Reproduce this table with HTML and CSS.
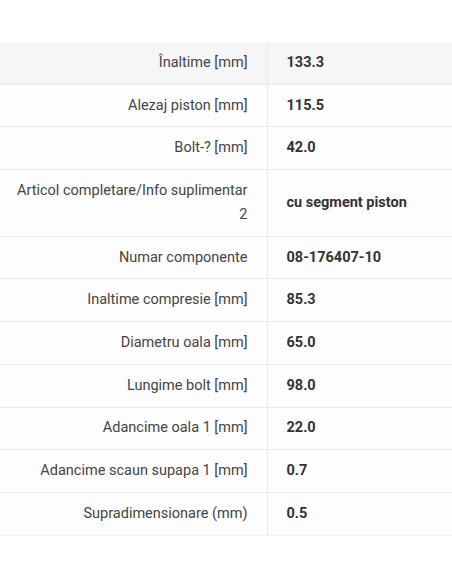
FILE: index.html
```html
<!DOCTYPE html>
<html>
<head>
<meta charset="utf-8">
<link rel="stylesheet" href="styles.css">
</head>
<body>
<table class="specs">
<tbody>
<tr class="first"><td class="label">Înaltime [mm]</td><td class="value">133.3</td></tr>
<tr><td class="label">Alezaj piston [mm]</td><td class="value">115.5</td></tr>
<tr><td class="label">Bolt-? [mm]</td><td class="value">42.0</td></tr>
<tr><td class="label">Articol completare/Info suplimentar 2</td><td class="value">cu segment piston</td></tr>
<tr><td class="label">Numar componente</td><td class="value">08-176407-10</td></tr>
<tr><td class="label">Inaltime compresie [mm]</td><td class="value">85.3</td></tr>
<tr><td class="label">Diametru oala [mm]</td><td class="value">65.0</td></tr>
<tr><td class="label">Lungime bolt [mm]</td><td class="value">98.0</td></tr>
<tr><td class="label">Adancime oala 1 [mm]</td><td class="value">22.0</td></tr>
<tr><td class="label">Adancime scaun supapa 1 [mm]</td><td class="value">0.7</td></tr>
<tr><td class="label">Supradimensionare (mm)</td><td class="value">0.5</td></tr>
</tbody>
</table>
</body>
</html>
```
FILE: styles.css
```css
html, body {
  margin: 0;
  padding: 0;
  background: #ffffff;
}
body {
  padding-top: 42px;
  font-family: Roboto, "Liberation Sans", sans-serif;
  font-size: 14.5px;
}
.specs {
  width: 100%;
  border-collapse: collapse;
  table-layout: fixed;
}
.specs tr {
  background: #fdfdfd;
  border-bottom: 1px solid #e9e9e9;
}
.specs tr:last-child {
  border-bottom: 1px solid #f3f3f3;
}
.specs tr.first {
  background: #f6f6f6;
}
.specs td {
  line-height: 24px;
  padding-top: 8.85px;
  padding-bottom: 8.85px;
  vertical-align: middle;
}
.label {
  width: 267px;
  box-sizing: border-box;
  text-align: right;
  padding-right: 19px;
  padding-left: 12px;
  color: #444444;
  border-right: 1px solid #e9e9e9;
}
.value {
  padding-left: 19px;
  padding-right: 12px;
  color: #333333;
  font-weight: bold;
}
```
